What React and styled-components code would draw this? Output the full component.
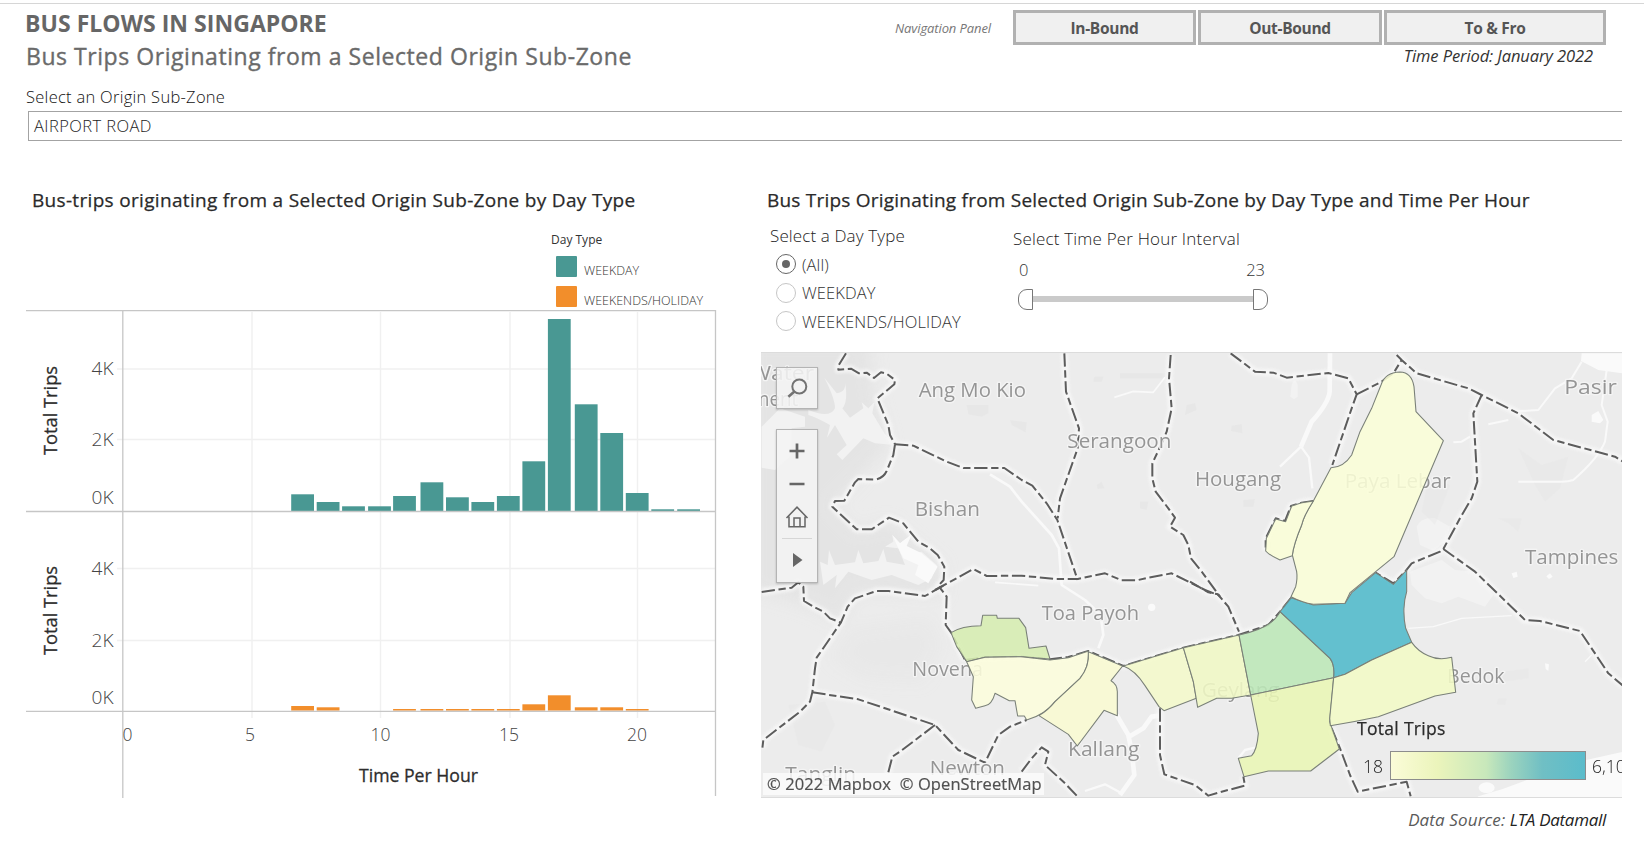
import React from "react";
import styled, { createGlobalStyle } from "styled-components";

const GlobalStyle = createGlobalStyle`
  * { box-sizing: border-box; }
  html, body { margin: 0; padding: 0; background: #fff; overflow: hidden; }
  body { font-family: "Open Sans", "Noto Sans", sans-serif; color: #333; }
  svg text { font-family: "Open Sans", "Noto Sans", sans-serif; }
`;

const Page = styled.div`
  width: 1644px;
  height: 842px;
  padding-top: 3px;
  background: #fff;
  overflow: hidden;
`;
const TopRule = styled.div`
  height: 1px;
  background: #d6d6d6;
`;
const Header = styled.header`
  display: flex;
  justify-content: space-between;
  width: 1606px;
  height: 83px;
  padding-left: 25px;
`;
const Headings = styled.div`
  padding-top: 3px;
  white-space: nowrap;
`;
const Title = styled.h1`
  margin: 0 0 1px;
  font-size: 23px;
  line-height: 32px;
  font-weight: 700;
  color: #666;
  letter-spacing: 0.04px;
`;
const Subtitle = styled.h2`
  margin: 0;
  padding-left: 1px;
  font-size: 23px;
  line-height: 32px;
  font-weight: 400;
  color: #6a6a6a;
  -webkit-text-stroke: 0.35px #6a6a6a;
  letter-spacing: 0.55px;
`;
const NavBlock = styled.div`
  display: flex;
  flex-direction: column;
  align-items: flex-end;
  padding-top: 6px;
`;
const NavRow = styled.nav`
  display: flex;
  align-items: center;
  gap: 2px;
`;
const NavLabel = styled.span`
  margin-right: 20px;
  font-size: 13px;
  line-height: 18px;
  font-style: italic;
  color: #777;
  letter-spacing: -0.1px;
`;
const NavButton = styled.button`
  width: ${(p) => p.$width}px;
  height: 35px;
  padding: 0;
  border: 3px solid #b1b1b1;
  background: #f0f0f0;
  font: 700 15.5px/28px "Open Sans", sans-serif;
  letter-spacing: -0.3px;
  color: #555;
`;
const Period = styled.div`
  margin-top: -1px;
  margin-right: 13px;
  font-size: 16.5px;
  line-height: 24px;
  font-style: italic;
  color: #333;
  letter-spacing: -0.1px;
`;

const Filter = styled.section`
  height: 100px;
`;
const FilterLabel = styled.div`
  padding-left: 26px;
  font-size: 16.5px;
  line-height: 20px;
  font-weight: 300;
  color: #111;
  letter-spacing: 0.28px;
`;
const Select = styled.div`
  width: 1594px;
  height: 30px;
  margin: 4px 0 0 28px;
  padding-left: 5px;
  border: 1px solid #a3a3a3;
  border-right: 0;
  font-size: 16.5px;
  line-height: 28px;
  font-weight: 300;
  color: #222;
  letter-spacing: 0.42px;
`;

const Panels = styled.main`
  display: flex;
  gap: 44px;
  padding-left: 26px;
`;
const LeftPanel = styled.section`
  width: 691px;
`;
const RightPanel = styled.section`
  width: 861px;
`;
const PanelTitle = styled.h3`
  margin: 0;
  padding-left: 6px;
  font-size: 19px;
  line-height: 26px;
  font-weight: 400;
  color: #2a2a2a;
  -webkit-text-stroke: 0.25px #2a2a2a;
  white-space: nowrap;
  letter-spacing: ${(p) => p.$track}px;
`;
const Legend = styled.div`
  height: 97px;
  padding: 18px 0 0 525px;
`;
const LegendTitle = styled.div`
  margin-bottom: 7px;
  font-size: 12px;
  line-height: 18px;
  color: #333;
`;
const LegendItem = styled.div`
  display: flex;
  gap: 7px;
  height: 21px;
  margin: 0 0 9px 5px;
  font-size: 12.5px;
  line-height: 29px;
  font-weight: 300;
  color: #333;
`;
const Swatch = styled.span`
  width: 21px;
  height: 21px;
  border-radius: 1px;
  background: ${(p) => p.$color};
`;
const Chart = styled.svg`
  display: block;
`;

const Controls = styled.div`
  display: flex;
  height: 139px;
  padding-left: 9px;
`;
const DayTypes = styled.div`
  width: 243px;
  padding-top: 11px;
`;
const ControlLabel = styled.div`
  margin-bottom: ${(p) => p.$below || 0}px;
  font-size: 17px;
  line-height: 24px;
  font-weight: 300;
  color: #222;
  white-space: nowrap;
  letter-spacing: ${(p) => p.$track || 0}px;
`;
const RadioRow = styled.label`
  display: flex;
  align-items: center;
  gap: 6px;
  height: 28.5px;
  padding-left: 6px;
  font-size: 16.5px;
  font-weight: 300;
  color: #333;
  white-space: nowrap;
  letter-spacing: 0.1px;
`;
const Radio = styled.span`
  display: flex;
  align-items: center;
  justify-content: center;
  width: 20px;
  height: 20px;
  border: ${(p) => (p.$on ? "1.5px solid #666" : "1.5px solid #c6c6c6")};
  border-radius: 50%;
  &::after {
    content: "";
    width: 8px;
    height: 8px;
    border-radius: 50%;
    background: ${(p) => (p.$on ? "#666" : "transparent")};
  }
`;
const Interval = styled.div`
  width: 255px;
  padding-top: 14px;
`;
const Range = styled.div`
  display: flex;
  justify-content: space-between;
  padding: 6px 3px 0 6px;
  font-size: 16.5px;
  line-height: 26px;
  font-weight: 300;
  color: #333;
`;
const Slider = styled.div`
  display: flex;
  align-items: center;
  height: 22px;
  margin: 5px 0 0 5px;
`;
const Handle = styled.span`
  width: 15px;
  height: 21px;
  border: 1px solid #777;
  border-radius: ${(p) => (p.$end ? "0 9px 9px 0" : "9px 0 0 9px")};
  background: #fff;
`;
const Track = styled.span`
  flex: 1;
  height: 6px;
  background: #cacaca;
`;

const MapFrame = styled.div`
  position: relative;
  width: 861px;
  height: 446px;
  border-top: 1px solid #dcdcdc;
  border-bottom: 1px solid #dcdcdc;
  overflow: hidden;
`;
const MapDrawing = styled.svg`
  display: block;
`;
const MapBox = styled.div`
  position: absolute;
  left: 15px;
  top: ${(p) => p.$top}px;
  width: 42px;
  height: ${(p) => p.$height}px;
  border: 1px solid #b4b4b4;
  background: rgba(244, 244, 244, 0.88);
  box-shadow: 0 1px 2px rgba(0, 0, 0, 0.2);
`;
const Attribution = styled.div`
  position: absolute;
  left: 2px;
  top: 420px;
  width: 281px;
  height: 22px;
  padding-left: 4px;
  background: rgba(250, 250, 250, 0.86);
  font-size: 16.5px;
  line-height: 22px;
  color: #505050;
  -webkit-text-stroke: 0.2px #505050;
  white-space: pre;
  letter-spacing: 0.09px;
`;
const MapLegend = styled.div`
  position: absolute;
  left: 596px;
  top: 362px;
  width: 290px;
`;
const MapLegendTitle = styled.div`
  font-size: 17.5px;
  line-height: 26px;
  color: #2b2b2b;
  -webkit-text-stroke: 0.25px #2b2b2b;
  letter-spacing: 0.3px;
`;
const Ramp = styled.div`
  display: flex;
  align-items: center;
  gap: 6px;
  margin-top: 10px;
  padding-left: 6px;
  font-size: 17.5px;
  line-height: 28px;
  font-weight: 300;
  color: #222;
`;
const RampBar = styled.span`
  width: 196px;
  height: 29px;
  border: 1px solid #8d8d8d;
  background: linear-gradient(to right, #fbfcd8 0%, #ebf4bb 24%, #c8e8bb 49%, #9bd3be 62%, #70bfc4 78%, #5bbccb 100%);
`;
const RampText = styled.span`
  min-width: 21px;
`;
const Source = styled.footer`
  padding: 8px 16px 0 0;
  text-align: right;
  font-size: 17px;
  line-height: 28px;
  font-style: italic;
  color: #5a5a5a;
  letter-spacing: 0.12px;
  b { font-weight: 400; color: #222; letter-spacing: -0.3px; }
`;

const GREEN = "#499893";
const ORANGE = "#f28e2b";

const weekday = [
  [291.2, 494.3], [316.7, 502], [342.1, 506.3], [368.1, 506.3], [393.1, 496], [420.5, 482.3],
  [446, 497.3], [471.4, 502], [496.9, 496], [522.4, 461.3], [547.9, 319], [574.8, 404.3],
  [600.3, 433], [625.8, 493], [651.3, 509.3], [677.2, 509.3],
];
const weekend = [
  [291.2, 706], [316.7, 707.3], [393.1, 709], [420.5, 709], [446, 709], [471.4, 709],
  [496.9, 709], [522.4, 704.3], [547.9, 695.3], [574.8, 707.3], [600.3, 707.3], [625.8, 709],
];

function TripsChart() {
  return (
    <Chart width="691" height="488" viewBox="26 310 691 488">
      <g stroke="#f0f0f0" strokeWidth="1.4">
        {[252, 380.5, 510, 637.5].map((x) => <path key={x} d={`M${x} 312V718`} />)}
        {[369, 439.5, 568.5, 640.5].map((y) => <path key={y} d={`M117 ${y}H716`} />)}
      </g>
      {weekday.map(([x, y]) => <rect key={x} x={x} y={y} width="22.8" height={511.3 - y} fill={GREEN} />)}
      {weekend.map(([x, y]) => <rect key={x} x={x} y={y} width="22.8" height={710.6 - y} fill={ORANGE} />)}
      <path
        d="M26 310.5H716M26 511.5H716M26 711.3H716M122.8 310V798M715.5 310V796"
        fill="none"
        stroke="#c6c6c6"
        strokeWidth="1.3"
      />
      <g fontSize="17.5" fontWeight="300" fill="#444" textAnchor="end">
        {[[375, "4K"], [446, "2K"], [504, "0K"], [575, "4K"], [647, "2K"], [703.7, "0K"]].map(([y, t]) => (
          <text key={y} x="113.5" y={y} textLength="22" lengthAdjust="spacingAndGlyphs">{t}</text>
        ))}
      </g>
      <g fontSize="17.5" fontWeight="300" fill="#444" textAnchor="middle">
        {[[127.5, "0"], [250, "5"], [380.5, "10"], [509, "15"], [637, "20"]].map(([x, t]) => (
          <text key={x} x={x} y="740.7">{t}</text>
        ))}
      </g>
      <g fontSize="18" fill="#2d2d2d" stroke="#2d2d2d" strokeWidth="0.3">
        <text x="359" y="782" textLength="119" lengthAdjust="spacingAndGlyphs">Time Per Hour</text>
        <text transform="translate(57.4 455) rotate(-90)" textLength="89" lengthAdjust="spacingAndGlyphs">Total Trips</text>
        <text transform="translate(57.4 655) rotate(-90)" textLength="89" lengthAdjust="spacingAndGlyphs">Total Trips</text>
      </g>
    </Chart>
  );
}

const borders = [
  "M273 25L250 62V74L288 71L312 85L335 83L357 99L378 82L395 86L420 105L418 118L367 160L400 240L405 270L420 298",
  "M420 298L475 302L575 350L625 369H748L800 405L832 422L875 475L907 525L968 705",
  "M420 298L415 330L395 378Q385 400 360 404L310 402L300 412L268 467L240 468L232 485L305 553H350L402 518L445 535L490 590L525 610L548 630L568 665L566 705L550 722L575 755L572 840L590 865L630 945",
  "M20 741L110 728L130 712L145 725L147 768L175 785L205 800L225 820L258 833",
  "M565 722L510 753L400 738H365L300 760L278 785L258 832L185 938L180 970L172 1042L165 1070L135 1100L25 1185L22 1210",
  "M540 735L605 700L655 672L695 693L800 692L900 702H968L1050 685L1100 706H1145L1180 698L1250 685L1350 735L1390 750L1420 785L1452 860",
  "M928 25L933 140L972 250L968 310L915 460L908 520",
  "M1247 30L1242 100L1250 190L1235 260L1218 300L1192 355V400L1202 440L1240 490L1260 518L1245 545L1285 570L1300 600L1308 640L1340 680L1395 755",
  "M1305 710L1360 742L1390 748",
  "M1427 25L1500 80L1555 83L1595 98L1720 84L1780 100L1805 148L1790 190L1732 360",
  "M1925 30L1940 45L1985 85L2140 130L2180 150L2290 205L2395 285L2580 335L2604 350",
  "M1805 148L1880 110L1915 85L1940 45",
  "M2180 150L2155 205L2167 410L2150 460L2115 520L2065 612L2055 620L1970 655L1950 680L1915 715L1862 683",
  "M2065 612L2160 680L2310 825L2355 828L2475 858L2560 985L2604 1022",
  "M630 945L690 937L800 935L885 943L940 936L1000 918L1105 963L1285 908L1450 870L1540 840L1575 800L1615 750",
  "M172 1042L310 1063L540 1140L610 1215L690 1253L730 1170L765 1145L815 1125",
  "M540 1140L435 1220L412 1235L398 1290",
  "M800 1280L830 1240L860 1207L880 1220L870 1260L930 1315L965 1352",
  "M1215 1090V1230L1228 1288L1320 1320L1360 1352L1400 1340L1470 1322L1465 1295",
  "M1730 1150L1755 1210L1785 1290L1808 1340L1955 1310L1967 1354",
  "M1675 468L1640 473L1608 483L1590 528L1562 520L1532 580V618",
];

const zones = [
  ["#d6edb0", "M588 863Q620 842 678 842L683 811H725L727 820H792L812 848L822 910L873 903L885 942L800 935L690 937L635 950L605 905Z"],
  ["#fcfddc", "M635 950L690 937L800 935L885 945L940 938L1000 918Q1004 965 975 1000L900 1070Q870 1110 815 1125L808 1113H788L780 1067H763L720 1045Q710 1080 690 1082L662 1090L650 1065L655 995Z"],
  ["#f9fad2", "M1000 920L1103 963L1068 1007Q1087 1018 1087 1040V1112L1047 1096L967 1203L940 1168L852 1112Q880 1095 900 1070L975 1000Q1004 965 1000 920Z"],
  ["#f4f9cb", "M1105 963L1285 908L1315 1010L1324 1060L1227 1097L1212 1085L1170 1022Q1140 975 1105 963Z"],
  ["#f0f8c5", "M1285 908L1452 870L1487 1050L1430 1060H1385L1328 1087L1315 1010Z"],
  ["#bce7b7", "M1452 870Q1550 850 1575 800L1725 940Q1740 960 1736 998L1487 1050Z"],
  ["#e9f6b5", "M1487 1050L1736 998L1724 1130L1753 1212L1667 1278H1540L1467 1295L1450 1240L1490 1232Q1506 1215 1510 1165Z"],
  ["#50bacb", "M1575 800L1608 758L1675 780L1770 775L1790 743L1862 683L1915 718L1955 675V740Q1940 790 1952 850L1970 892L1850 945L1770 988L1736 998Q1740 960 1725 940Z"],
  ["#f3fac6", "M1736 998L1770 988L1850 945L1970 892Q1990 920 2020 932Q2050 947 2090 937L2102 1042L2040 1053L1870 1115Q1800 1130 1726 1142L1724 1120Z"],
  ["#fbfed7", "M1878 120Q1890 82 1935 81Q1970 82 1977 125L1983 200L2065 287L1917 635L1785 743L1770 775L1675 778Q1640 772 1608 755L1622 725Q1628 700 1625 680L1612 630Q1615 600 1640 540Q1645 515 1675 468L1728 368Q1765 368 1790 330L1815 260L1850 190Z"],
  ["#fbfed7", "M1675 468L1640 473L1610 483L1592 530L1562 522L1534 580L1532 618Q1545 632 1575 645L1612 632Q1615 600 1640 540Q1645 515 1675 468Z"],
];

const places = [
  [491, 156, 322, "Ang Mo Kio"],
  [479, 513, 196, "Bishan"],
  [937, 308, 312, "Serangoon"],
  [1320, 424, 258, "Hougang"],
  [1769, 428, 318, "Paya Lebar"],
  [2428, 146, 268, "Pasir Ris"],
  [2310, 657, 280, "Tampines"],
  [860, 826, 292, "Toa Payoh"],
  [472, 993, 212, "Novena"],
  [939, 1233, 214, "Kallang"],
  [1340, 1057, 234, "Geylang"],
  [2076, 1013, 173, "Bedok"],
  [524, 1291, 226, "Newton"],
  [91, 1309, 212, "Tanglin"],
  [-15, 106, 192, "Water"],
  [-158, 182, 288, "Catchment"],
];

function TripsMap() {
  return (
    <MapDrawing width="861" height="445" viewBox="18 24 2583 1335">
      <defs>
        <filter id="soft" x="-20%" y="-20%" width="140%" height="140%"><feGaussianBlur stdDeviation="22" /></filter>
        <filter id="glow" x="-5%" y="-5%" width="110%" height="110%"><feGaussianBlur stdDeviation="4" /></filter>
      </defs>
      <rect x="18" y="20" width="2590" height="1345" fill="#ececec" />
      <g filter="url(#soft)" fill="#e4e4e4">
        <path d="M-20 -20H340L360 160L400 300L300 410L230 480L310 560L400 530L560 660V750L300 740L260 830L150 780L-20 730Z" />
        <path d="M290 850L520 820L560 900L500 1010L330 1000L230 940Z" opacity=".4" />
      </g>
      <g fill="#f2f2f2">
        <path d="M20 245L75 190L150 215L150 245L110 250V330L60 375L20 368Z" />
        <path d="M160 195Q225 222 240 190Q240 160 208 98L245 145Q275 140 270 110Q280 170 262 190L285 218L325 190L320 172L340 190L358 172L352 205L370 235L390 268L420 300L360 295L325 280L262 345L245 328L275 300L240 240L216 278L225 240Q180 215 160 210Z" />
        <path d="M195 650L218 660L222 615L240 660L300 652L310 615L325 655L370 648L385 612L395 650L450 660L430 610L390 605L415 590L412 570L435 595L470 570L450 600L480 625L500 620L545 660L530 700L490 720L410 690L350 705L280 680L240 730L245 690L205 720Z" />
        <path d="M1985 545Q2000 515 2040 520L2085 545L2070 590L2035 618L1995 600Z" />
        <path d="M1965 680L2060 645L2100 675L2160 680L2215 750L2190 785L2110 755L2060 775L2010 760L1970 720Z" />
        <path d="M1610 120Q1620 95 1628 120V155L1617 163L1606 155Z" />
      </g>
      <g fill="#fafafa">
        <path d="M430 610L412 570L435 595L470 568L455 603L500 625L548 665L520 715L480 690L490 660L445 640Z" />
        <path d="M2170 1354Q2260 1330 2350 1290L2470 1250L2604 1220V1364H2160Z" />
        <path d="M2480 25H2604V85L2530 75L2478 48Z" />
        <ellipse cx="2195" cy="1328" rx="24" ry="16" />
        <circle cx="1190" cy="787" r="11" />
        <path d="M2510 210L2530 198L2545 225L2535 235L2510 230Z M2270 685L2285 680L2288 695L2275 699Z M2374 694L2385 685L2393 695L2382 702Z M2370 955L2382 958L2380 978L2372 972Z" />
      </g>
      <g fill="#e5e5e5">
        <path opacity=".6" d="M635 180H700V205L680 215L640 208Z M765 225L815 232L812 262L770 240Z M1095 85H1230V100H1095Z M1295 180L1320 175L1325 195L1290 210Z M1430 242L1460 238L1462 265L1428 258Z M1018 95H1045L1040 110H1015Z M1465 465L1500 462L1495 485H1465Z M1155 470H1180L1175 495L1155 490Z M1025 420L1040 410L1048 430L1028 432Z" />
        <path opacity=".4" d="M2290 310L2360 360L2440 335L2415 430L2370 470L2340 420Z M2230 520H2300L2290 560L2260 535Z M2240 980L2320 970V1000L2245 1010Z M2230 1060H2255L2250 1080L2225 1078Z M2020 400L2085 420L2040 540L2000 500Z M100 1080L210 1070L240 1140L200 1220L130 1200Z" />
      </g>
      <g fill="none" stroke="#f9f9f9" strokeWidth="9" strokeLinejoin="round">
        <path d="M1725 25L1724 140Q1720 175 1670 230L1638 305" strokeWidth="14" />
        <path d="M1638 305L1575 365M1638 305L1662 338L1672 430" strokeWidth="7" />
        <path d="M1078 157L1135 139L1195 142L1230 97" strokeWidth="5" />
        <path d="M705 388L765 425L800 470L890 570L912 610L920 720L990 765L1037 810L1045 870L1030 910" strokeWidth="8" />
        <path d="M1085 1110L1120 1170L1130 1220L1138 1290L1095 1350M1122 1175L1165 1150L1190 1115L1215 1112" strokeWidth="14" />
        <path d="M990 1338L1050 1318L1100 1345M1450 1240L1470 1215L1500 1208" strokeWidth="7" />
        <path d="M2480 50L2450 100L2400 130L2350 195L2270 200M2555 75L2540 180L2558 230L2550 290Q2530 340 2455 405Q2440 410 2420 410H2290M2200 238L2260 225M2095 292L2120 290L2145 275" strokeWidth="6" />
        <path d="M1960 850L2035 845L2120 820L2270 812M2490 950L2510 930" strokeWidth="4" />
        <path d="M720 712L850 722" strokeWidth="5" />
      </g>
      <g filter="url(#glow)" fill="none" stroke="#fafafa" strokeWidth="22" strokeLinejoin="round" opacity=".7">
        {borders.map((d, i) => <path key={i} d={d} />)}
      </g>
      <g fill="none" stroke="#5c5c5c" strokeWidth="6" strokeLinejoin="round" strokeDasharray="40 11 22 11">
        {borders.map((d, i) => <path key={i} d={d} />)}
      </g>
      <g fontSize="60" fill="#959595" stroke="#f4f4f4" strokeWidth="8" strokeLinejoin="round" paintOrder="stroke">
        {places.map(([x, y, w, t]) => (
          <text key={t} x={x} y={y} textLength={w} lengthAdjust="spacingAndGlyphs">{t}</text>
        ))}
      </g>
      <g stroke="#7a8078" strokeWidth="3.2" strokeLinejoin="round" fillOpacity=".88">
        {zones.map(([c, d]) => <path key={d} fill={c} d={d} />)}
      </g>
    </MapDrawing>
  );
}

function SearchIcon() {
  return (
    <svg width="40" height="40" viewBox="0 0 40 40" fill="none" stroke="#737373">
      <circle cx="22.3" cy="18.5" r="7" strokeWidth="2" />
      <path d="M17.4 23.6L11.4 28.8" strokeWidth="2.6" />
    </svg>
  );
}

function ZoomTools() {
  return (
    <svg width="40" height="151" viewBox="0 0 40 151" fill="none" stroke="#666">
      <path d="M12.5 21H27.5M20 13.5V28.5M12.5 54H27.5" strokeWidth="2.7" />
      <path d="M9.5 88L20 77.2L30.5 88M12 86.5V96.8H28V86.5M17 96.5V88H23V96.5" strokeWidth="1.5" />
      <path d="M5 108.5H35" stroke="#d6d6d6" />
      <path d="M16 123V137L25.5 130Z" fill="#666" stroke="none" />
    </svg>
  );
}

export default function App() {
  return (
    <Page>
      <GlobalStyle />
      <TopRule />
      <Header>
        <Headings>
          <Title>BUS FLOWS IN SINGAPORE</Title>
          <Subtitle>Bus Trips Originating from a Selected Origin Sub-Zone</Subtitle>
        </Headings>
        <NavBlock>
          <NavRow>
            <NavLabel>Navigation Panel</NavLabel>
            <NavButton $width={183}>In-Bound</NavButton>
            <NavButton $width={184}>Out-Bound</NavButton>
            <NavButton $width={222}>To &amp; Fro</NavButton>
          </NavRow>
          <Period>Time Period: January 2022</Period>
        </NavBlock>
      </Header>
      <Filter>
        <FilterLabel>Select an Origin Sub-Zone</FilterLabel>
        <Select>AIRPORT ROAD</Select>
      </Filter>
      <Panels>
        <LeftPanel>
          <PanelTitle $track={0.32}>Bus-trips originating from a Selected Origin Sub-Zone by Day Type</PanelTitle>
          <Legend>
            <LegendTitle>Day Type</LegendTitle>
            <LegendItem><Swatch $color={GREEN} />WEEKDAY</LegendItem>
            <LegendItem><Swatch $color={ORANGE} />WEEKENDS/HOLIDAY</LegendItem>
          </Legend>
          <TripsChart />
        </LeftPanel>
        <RightPanel>
          <PanelTitle $track={0.22}>Bus Trips Originating from Selected Origin Sub-Zone by Day Type and Time Per Hour</PanelTitle>
          <Controls>
            <DayTypes>
              <ControlLabel $below={2} $track={0.12}>Select a Day Type</ControlLabel>
              <RadioRow><Radio $on />(All)</RadioRow>
              <RadioRow><Radio />WEEKDAY</RadioRow>
              <RadioRow><Radio />WEEKENDS/HOLIDAY</RadioRow>
            </DayTypes>
            <Interval>
              <ControlLabel $track={0.18}>Select Time Per Hour Interval</ControlLabel>
              <Range><span>0</span><span>23</span></Range>
              <Slider><Handle /><Track /><Handle $end /></Slider>
            </Interval>
          </Controls>
          <MapFrame>
            <TripsMap />
            <MapBox $top={14} $height={42}><SearchIcon /></MapBox>
            <MapBox $top={76} $height={154}><ZoomTools /></MapBox>
            <Attribution>© 2022 Mapbox  © OpenStreetMap</Attribution>
            <MapLegend>
              <MapLegendTitle>Total Trips</MapLegendTitle>
              <Ramp><RampText>18</RampText><RampBar /><RampText>6,103</RampText></Ramp>
            </MapLegend>
          </MapFrame>
          <Source>Data Source: <b>LTA Datamall</b></Source>
        </RightPanel>
      </Panels>
    </Page>
  );
}
